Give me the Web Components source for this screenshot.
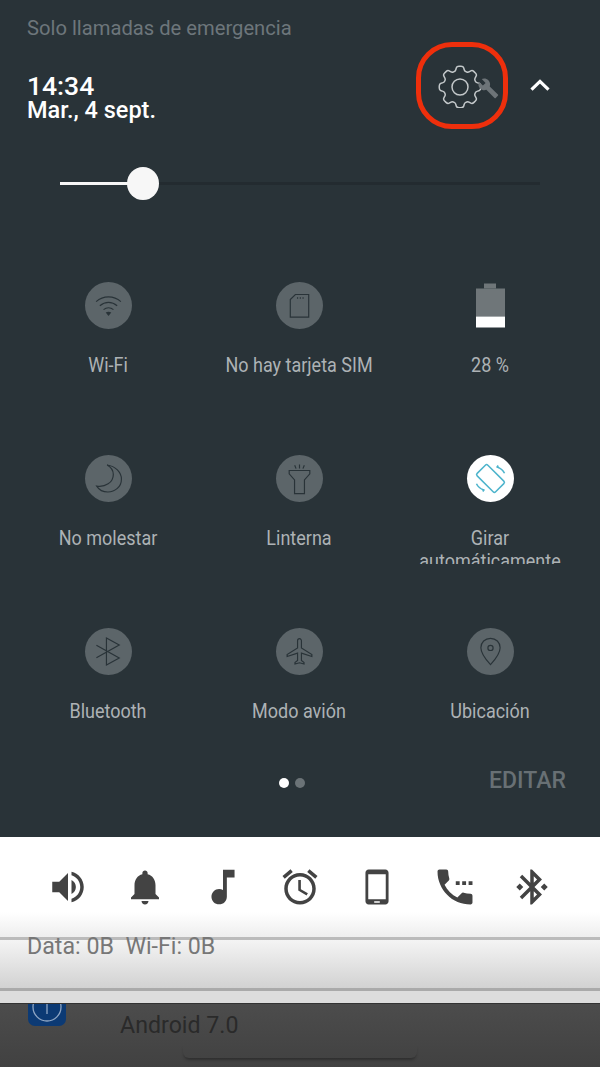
<!DOCTYPE html>
<html lang="es">
<head>
<meta charset="utf-8">
<title>Ajustes rápidos</title>
<style>
  html, body { margin: 0; padding: 0; }
  body { width: 600px; height: 1067px; overflow: hidden; font-family: Roboto, "Liberation Sans", sans-serif; background: #444; }
</style>
</head>
<body>
<qs-panel>
  <qs-header></qs-header>
  <qs-brightness level="17.3"></qs-brightness>
  <qs-grid>
    <qs-tile label="Wi-Fi" icon="wifi"></qs-tile>
    <qs-tile label="No hay tarjeta SIM" icon="sim"></qs-tile>
    <qs-tile label="28 %" icon="battery"></qs-tile>
    <qs-tile label="No molestar" icon="moon"></qs-tile>
    <qs-tile label="Linterna" icon="torch"></qs-tile>
    <qs-tile label="Girar automáticamente" icon="rotate" active></qs-tile>
    <qs-tile label="Bluetooth" icon="bluetooth"></qs-tile>
    <qs-tile label="Modo avión" icon="plane"></qs-tile>
    <qs-tile label="Ubicación" icon="pin"></qs-tile>
  </qs-grid>
  <qs-footer></qs-footer>
</qs-panel>
<sound-strip></sound-strip>
<data-usage></data-usage>
<app-behind></app-behind>

<script>
// outline icons for the tiles, 24 unit box
const TILE_ICONS = {
  wifi: `<path d="M3 9.2c5.2-4.6 12.800-4.600 18 0M5.700 12.200c3.800-3.300 8.800-3.300 12.600 0M8.400 15c2.100-1.700 5.100-1.700 7.200 0"/><path d="M12 19.600l-2-2.500c1.200-.8 2.800-.8 4 0z" fill="#293338" stroke="none"/>`,
  sim: `<path d="M9 4h9.700v16.500H5.300V7.700z"/><path d="M10.600 6v1M12.600 6v1M14.600 6v1"/>`,
  moon: `<path d="M11 2.200C17 3 21.400 7.500 21.400 12.500 21.400 18 16.800 21.800 11.500 21.800 8 21.800 5 20 3.400 17.500 9.500 18.500 15.500 15 15.500 9 15.500 6 13.500 3.600 11 2.200z"/>`,
  torch: `<path d="M4.500 6.200h15v2.400L15.600 13v10H8.400V13L4.500 8.600z"/><path d="M8.500 2.400l1 2.400M12 1.800v3M15.500 2.400l-1 2.400"/>`,
  rotate: `<rect x="6.500" y="2.500" width="11" height="19" rx="1.300" transform="rotate(-45 12 12)"/><path d="M16.800 3.600c2.400.8 4.400 2.400 5.400 4.600M7.200 20.400c-2.400-.8-4.400-2.400-5.400-4.600"/><path d="M17.600 2.500l-.8 1.100 1.300.5M6.400 21.500l.8-1.100-1.300-.5"/>`,
  bluetooth: `<path d="M3.200 7.400L19.800 16.800 10.500 21.800V2.200L19.800 7.200 3.200 16.600"/>`,
  plane: `<path d="M21 15.600v-1.400l-7.600-4.800V4.200c0-.8-.6-1.600-1.400-1.600s-1.400.8-1.400 1.600v5.200L3 14.200v1.400l7.600-2.400v5.400l-1.900 1.400v1.100l3.300-.9 3.300.9v-1.100l-1.900-1.400v-5.400z"/>`,
  pin: `<path d="M12 2.400c-4 0-7 3-7 6.900 0 4.700 7 12.300 7 12.300s7-7.600 7-12.300c0-3.900-3-6.900-7-6.900z"/><circle cx="12" cy="9.400" r="1.900"/>`
};

// gear outline, teeth worked out instead of typed by hand, corners softened
function gearPath(cx, cy, outer, inner, teeth) {
  const pts = [];
  const step = Math.PI * 2 / teeth;
  for (let i = 0; i < teeth; i++) {
    const a = i * step - Math.PI / 2;
    [[-0.36, inner], [-0.2, outer], [0.2, outer], [0.36, inner]].forEach(([k, r]) => {
      const t = a + k * step;
      pts.push([cx + Math.cos(t) * r, cy + Math.sin(t) * r]);
    });
  }
  const mix = (p, q, k) => (p[0] + (q[0] - p[0]) * k).toFixed(2) + ' ' + (p[1] + (q[1] - p[1]) * k).toFixed(2);
  let d = '';
  pts.forEach((p, i) => {
    const prev = pts[(i + pts.length - 1) % pts.length];
    const next = pts[(i + 1) % pts.length];
    d += (i ? 'L' : 'M') + mix(p, prev, .35) + 'Q' + mix(p, p, 0) + ' ' + mix(p, next, .35);
  });
  return d + 'Z';
}

class QsPanel extends HTMLElement {
  constructor() {
    super();
    this.attachShadow({ mode: 'open' });
    this.shadowRoot.innerHTML = `
      <style>
        :host { display: block; height: 837px; background: #293338; overflow: hidden; }
      </style>
      <slot></slot>
    `;
  }
}

class QsHeader extends HTMLElement {
  constructor() {
    super();
    this.attachShadow({ mode: 'open' });
    this.shadowRoot.innerHTML = `
      <style>
        :host { display: block; font-family: Roboto, "Liberation Sans", sans-serif; }
        .carrier { height: 42px; padding: 16px 0 0 27px; box-sizing: border-box; font-size: 20.2px; line-height: 24px; color: #6d767b; }
        .row { display: flex; align-items: center; height: 87px; padding-left: 27px; }
        .clock { flex: 1; color: #fff; font-weight: 500; padding-top: 25px; }
        .time { font-size: 26.5px; line-height: 24px; }
        .date { font-size: 23.5px; line-height: 24px; }
        .ring { width: 92px; height: 87px; box-sizing: border-box; border: 5px solid #ee2f0c; border-radius: 36px; position: relative; }
        .ring svg { position: absolute; left: 17px; top: 17px; }
        .chevron { width: 24px; margin: 0 48px 0 20px; display: block; }
      </style>
      <div class="carrier">Solo llamadas de emergencia</div>
      <div class="row">
        <div class="clock">
          <div class="time">14:34</div>
          <div class="date">Mar., 4 sept.</div>
        </div>
        <div class="ring">
          <svg width="64" height="44" viewBox="0 0 64 44" fill="none">
            <path d="${gearPath(22, 23, 21, 16.5, 8)}" stroke="#c3c8ca" stroke-width="1.500" stroke-linejoin="round"/>
            <circle cx="22" cy="23" r="8" stroke="#c3c8ca" stroke-width="1.500"/>
            <g transform="translate(39.500 13.500) scale(.9)"><path fill="#6d7478" d="M22.700 19l-9.100-9.100c.9-2.300.4-5-1.500-6.900-2-2-5-2.400-7.400-1.300L9 6 6 9 1.600 4.700C.4 7.100.9 10.100 2.900 12.100c1.900 1.900 4.600 2.400 6.900 1.500l9.100 9.100c.4.4 1 .4 1.400 0l2.300-2.300c.5-.4.5-1.100.1-1.400z"/></g>
          </svg>
        </div>
        <svg class="chevron" viewBox="0 0 24 24" height="24" fill="none"><path d="M3.500 15.600L12 7.400l8.500 8.200" stroke="#fff" stroke-width="3.200"/></svg>
      </div>
    `;
  }
}

class QsBrightness extends HTMLElement {
  constructor() {
    super();
    this.attachShadow({ mode: 'open' });
    const level = this.getAttribute('level') || 0;
    this.shadowRoot.innerHTML = `
      <style>
        :host { display: block; height: 108px; padding: 0 60px; box-sizing: border-box; }
        .wrap { display: flex; align-items: center; height: 108px; }
        .track { flex: 1; height: 3px; background: #232b30; position: relative; }
        .fill { height: 100%; background: #f7f7f7; }
        .thumb { position: absolute; top: -15px; width: 32px; height: 33px; margin-left: -16px; border-radius: 50%; background: #f7f7f7; }
      </style>
      <div class="wrap">
        <div class="track">
          <div class="fill" style="width:${level}%"></div>
          <div class="thumb" style="left:${level}%"></div>
        </div>
      </div>
    `;
  }
}

class QsGrid extends HTMLElement {
  constructor() {
    super();
    this.attachShadow({ mode: 'open' });
    this.shadowRoot.innerHTML = `
      <style>
        :host { display: grid; grid-template-columns: repeat(3, 191px); row-gap: 64px; padding: 44.5px 0 0 12.5px; }
      </style>
      <slot></slot>
    `;
  }
}

class QsTile extends HTMLElement {
  constructor() {
    super();
    this.attachShadow({ mode: 'open' });
    const icon = this.getAttribute('icon');
    const active = this.hasAttribute('active');
    const glyph = icon === 'battery'
      ? `<svg width="47" height="47" viewBox="0 0 47 47"><path d="M17 1.500h12v5h-12z" fill="#6f7679"/><path d="M9 6.500h29v28h-29z" fill="#6f7679"/><path d="M9 34.500h29v11h-29z" fill="#fff"/></svg>`
      : `<div class="disc${active ? ' on' : ''}"><svg width="33" height="33" viewBox="0 0 24 24" fill="none" stroke-width="${active ? 1.1 : .85}" stroke="${active ? '#4db4cc' : '#293338'}">${TILE_ICONS[icon]}</svg></div>`;
    this.shadowRoot.innerHTML = `
      <style>
        :host { display: flex; flex-direction: column; align-items: center; height: 109px; font-family: Roboto, "Liberation Sans", sans-serif; }
        .disc { width: 47px; height: 47px; border-radius: 50%; background: #5c6569; display: flex; align-items: center; justify-content: center; }
        .disc.on { background: #fff; }
        svg { display: block; }
        .label { width: 182px; height: 37px; margin-top: 25px; overflow: hidden; text-align: center; }
        .label span { display: inline-block; width: 182px; font-size: 19.5px; line-height: 23px; color: #adb2b5; transform: scaleX(.923); }
      </style>
      ${glyph}
      <div class="label"><span>${this.getAttribute('label')}</span></div>
    `;
  }
}

class QsFooter extends HTMLElement {
  constructor() {
    super();
    this.attachShadow({ mode: 'open' });
    this.shadowRoot.innerHTML = `
      <style>
        :host { display: grid; grid-template-columns: 1fr auto 1fr; align-items: center; height: 88px; padding: 0 34px 0 18px; font-family: Roboto, "Liberation Sans", sans-serif; }
        .dots { grid-column: 2; display: flex; gap: 6px; margin-top: 4px; }
        .dots i { width: 10px; height: 10px; border-radius: 50%; background: #6b7377; }
        .dots i:first-child { background: #fff; }
        .edit { justify-self: end; font-size: 23px; font-weight: 500; color: #687074; }
      </style>
      <div class="dots"><i></i><i></i></div>
      <div class="edit">EDITAR</div>
    `;
  }
}

class SoundStrip extends HTMLElement {
  constructor() {
    super();
    this.attachShadow({ mode: 'open' });
    const icons = [
      ['M3 9v6h4l5 5V4L7 9H3zm13.500 3c0-1.770-1.020-3.290-2.500-4.030v8.050c1.480-.73 2.500-2.250 2.500-4.020zM14 3.230v2.060c2.890.86 5 3.540 5 6.710s-2.110 5.850-5 6.710v2.060c4.010-.91 7-4.490 7-8.770s-2.990-7.860-7-8.770z', 1],
      ['M12 22c1.100 0 2-.9 2-2h-4c0 1.100.9 2 2 2zm6-6v-5c0-3.070-1.630-5.640-4.500-6.320V4c0-.83-.67-1.500-1.500-1.500s-1.500.67-1.500 1.500v.68C7.640 5.360 6 7.920 6 11v5l-2 2v1h16v-1l-2-2z', 1],
      ['M12 3v10.550c-.59-.34-1.270-.55-2-.55-2.210 0-4 1.790-4 4s1.790 4 4 4 4-1.790 4-4V7h4V3h-6z', 1.1],
      ['M22 5.720l-4.600-3.860-1.290 1.530 4.600 3.860L22 5.720zM7.880 3.390L6.600 1.860 2 5.710l1.290 1.530 4.590-3.850zM12.500 8H11v6l4.750 2.850.75-1.230-4-2.370V8zM12 4c-4.970 0-9 4.030-9 9s4.020 9 9 9c4.970 0 9-4.030 9-9s-4.030-9-9-9zm0 16c-3.870 0-7-3.130-7-7s3.130-7 7-7 7 3.130 7 7-3.130 7-7 7z', 1],
      ['M7.200 2h9.600c1 0 1.800.8 1.800 1.800v16.400c0 1-.8 1.800-1.800 1.800H7.200c-1 0-1.800-.8-1.800-1.800V3.800C5.400 2.800 6.200 2 7.200 2zM7 4.700v14.300h10V4.700H7zm3.400 15.500v.8h3.200v-.8h-3.200z', 1],
      ['M6.620 10.790c1.440 2.830 3.760 5.140 6.590 6.590l2.200-2.200c.27-.27.67-.36 1.020-.24 1.120.37 2.330.57 3.570.57.55 0 1 .45 1 1V20c0 .55-.45 1-1 1-9.390 0-17-7.610-17-17 0-.55.45-1 1-1h3.500c.55 0 1 .45 1 1 0 1.250.2 2.450.57 3.570.11.35.03.74-.25 1.020l-2.200 2.200zM12.400 9h2v2h-2zM15.700 9h2v2h-2zM19 9h2v2h-2z', 1.11],
      ['M7 12l-2-2-2 2 2 2 2-2zm10.710-4.290L12 2h-1v7.590L6.410 5 5 6.410 10.590 12 5 17.590 6.410 19 11 14.410V22h1l5.710-5.710-4.300-4.290 4.300-4.290zM13 5.830l1.880 1.880L13 9.590V5.830zm1.880 10.460L13 18.170v-3.760l1.880 1.880zM19 10l-2 2 2 2 2-2-2-2z', 1]
    ];
    this.shadowRoot.innerHTML = `
      <style>
        :host { display: flex; align-items: flex-start; justify-content: space-between; box-sizing: border-box; height: 100px; padding: 29px 47px 0 47px; background: linear-gradient(#fff 75%, #eee 100%); }
        svg { display: block; width: 42px; height: 42px; fill: #434343; }
      </style>
      ${icons.map(([d, s]) => `<svg viewBox="0 0 24 24" style="transform:scale(${s})"><path d="${d}"/></svg>`).join('')}
    `;
  }
}

class DataUsage extends HTMLElement {
  constructor() {
    super();
    this.attachShadow({ mode: 'open' });
    this.shadowRoot.innerHTML = `
      <style>
        :host {
          display: block; box-sizing: border-box; height: 66px; padding: 0 0 0 27px;
          font-family: Roboto, "Liberation Sans", sans-serif; font-size: 23.2px; line-height: 18px; color: #777;
          background: linear-gradient(#bbb 0 3px, #f4f4f4 3px, #d2d2d2 51px, #aaa 51px 54px, #ddd 54px);
        }
        span { white-space: pre; }
      </style>
      <span>Data: 0B  Wi-Fi: 0B</span>
    `;
  }
}

class AppBehind extends HTMLElement {
  constructor() {
    super();
    this.attachShadow({ mode: 'open' });
    this.shadowRoot.innerHTML = `
      <style>
        :host {
          display: flex; height: 64px; position: relative; overflow: hidden; padding-left: 28px;
          background: linear-gradient(#4c4c4c, #414141); border-top: 1px solid #333;
          font-family: Roboto, "Liberation Sans", sans-serif;
        }
        .logo { width: 38px; height: 22px; background: #0c3a74; border-radius: 0 0 7px 7px; overflow: hidden; }
        .logo svg { display: block; }
        .name { margin: 8px 0 0 54px; font-size: 23.2px; line-height: 26px; color: #2a2a2a; }
        .toast { position: absolute; left: 183px; width: 234px; top: 40px; height: 14px; border-radius: 0 0 6px 6px; box-shadow: 0 3px 3px -1px rgba(0,0,0,.3); }
      </style>
      <div class="logo">
        <svg width="38" height="22" viewBox="0 0 38 22" fill="none" stroke="#8fa6c4" stroke-width="1.300"><circle cx="19" cy="3" r="14"/><path d="M19 0v10"/></svg>
      </div>
      <div class="name">Android 7.0</div>
      <div class="toast"></div>
    `;
  }
}

customElements.define('qs-panel', QsPanel);
customElements.define('qs-header', QsHeader);
customElements.define('qs-brightness', QsBrightness);
customElements.define('qs-grid', QsGrid);
customElements.define('qs-tile', QsTile);
customElements.define('qs-footer', QsFooter);
customElements.define('sound-strip', SoundStrip);
customElements.define('data-usage', DataUsage);
customElements.define('app-behind', AppBehind);
</script>
</body>
</html>
